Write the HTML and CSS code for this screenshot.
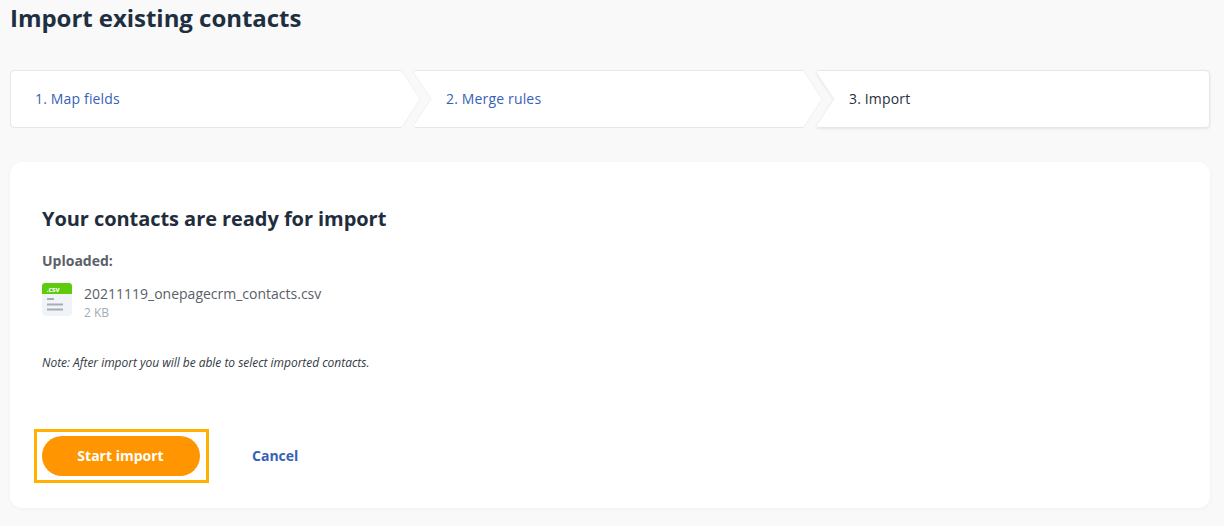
FILE: index.html
```html
<!DOCTYPE html>
<html lang="en">
<head>
<meta charset="utf-8">
<title>Import existing contacts</title>
<link rel="stylesheet" href="styles.css">
</head>
<body>
<h1 class="page-title">Import existing contacts</h1>
<nav class="steps">
  <a class="step step-first">
    <svg class="step-bg" width="412" height="58" viewBox="0 0 412 58"><path class="fill" d="M4 .5H390a3 3 0 0 1 2.400 1.200L410 29 392.400 56.300a3 3 0 0 1-2.400 1.200H4a3.500 3.500 0 0 1-3.500-3.500V4a3.500 3.500 0 0 1 3.500-3.500Z"/><path class="edge" d="M391 .5H4a3.500 3.500 0 0 0-3.500 3.500V54a3.500 3.500 0 0 0 3.500 3.500H391"/></svg>
    <span class="step-label">1. Map fields</span>
  </a>
  <a class="step step-mid">
    <svg class="step-bg" width="412" height="58" viewBox="0 0 412 58"><path class="fill" d="M2 .5H389a3 3 0 0 1 2.400 1.200L409 29 391.400 56.300a3 3 0 0 1-2.400 1.200H2a1.500 1.500 0 0 1-1.200-2.400L18 29 .8 2.900A1.500 1.500 0 0 1 2 .5Z"/><path class="edge" d="M2 .5H390M2 57.500H390"/></svg>
    <span class="step-label">2. Merge rules</span>
  </a>
  <a class="step step-last">
    <svg class="step-bg step-bg-last" width="394" height="58" viewBox="0 0 394 58"><path class="fill" d="M2 .5H390a3.500 3.500 0 0 1 3.500 3.500V54a3.500 3.500 0 0 1-3.500 3.500H2a1.500 1.500 0 0 1-1.200-2.400L18 29 .8 2.900A1.500 1.500 0 0 1 2 .5Z"/><path class="edge" d="M2 .5H390a3.500 3.500 0 0 1 3.500 3.500V54a3.500 3.500 0 0 1-3.500 3.500H2"/></svg>
    <span class="step-label">3. Import</span>
  </a>
</nav>
<main class="card">
  <h2 class="card-title">Your contacts are ready for import</h2>
  <div class="uploaded-label">Uploaded:</div>
  <div class="file">
    <svg class="file-icon" viewBox="0 0 30 34" aria-hidden="true">
      <path class="icon-body" d="M0 10H30V29a4 4 0 0 1-4 4H4a4 4 0 0 1-4-4Z"/>
      <path class="icon-head" d="M3 0H27a3 3 0 0 1 3 3V11H0V3a3 3 0 0 1 3-3Z"/>
      <text class="icon-text" x="4.500" y="8.500">.csv</text>
      <rect class="icon-line" x="5" y="15" width="7" height="2"/>
      <rect class="icon-line" x="5" y="20.500" width="16" height="2"/>
      <rect class="icon-line" x="5" y="25.500" width="16" height="2"/>
    </svg>
    <div class="file-info">
      <div class="file-name">20211119_onepagecrm_contacts.csv</div>
      <div class="file-size">2 KB</div>
    </div>
  </div>
  <p class="note">Note: After import you will be able to select imported contacts.</p>
  <div class="actions">
    <div class="focus-frame"><button class="primary">Start import</button></div>
    <a class="cancel">Cancel</a>
  </div>
</main>
</body>
</html>
```

FILE: styles.css
```css
* { box-sizing: border-box; }
html, body { margin: 0; height: 100%; overflow: hidden; }
body {
  background: #f9f9f9;
  font-family: "Open Sans", sans-serif;
  color: #1f2d3d;
  padding: 0 14px 0 10px;
}
.page-title {
  margin: 0;
  padding-top: 1px;
  font-size: 24px;
  line-height: 33px;
  font-weight: 700;
  letter-spacing: -.04px;
  color: #1e2f41;
}
.steps {
  display: flex;
  margin-top: 36px;
  height: 58px;
}
.step {
  position: relative;
  display: flex;
  align-items: center;
  height: 58px;
  padding-bottom: 2px;
  font-size: 14px;
  font-weight: 500;
  letter-spacing: .16px;
  color: #3761b8;
}
.step-first { width: 403px; padding-left: 25px; }
.step-mid { width: 403px; padding-left: 33px; }
.step-last { flex: 1; padding-left: 33px; color: #27313d; }
.step-bg { position: absolute; left: 0; top: 0; overflow: visible; }
.step-bg-last { filter: drop-shadow(0 1px 1px rgba(0,0,0,.08)); }
.fill { fill: #fff; stroke: #f1f1f1; stroke-width: 1; }
.edge { fill: none; stroke: #e7e7e7; stroke-width: 1; }
.step-label { position: relative; }
.card {
  margin-top: 34px;
  height: 346px;
  background: #fff;
  border-radius: 12px;
  box-shadow: 0 1px 4px rgba(0,0,0,.04);
  padding: 43px 32px 0;
}
.card-title {
  margin: 0;
  font-size: 20px;
  line-height: 27px;
  font-weight: 700;
  letter-spacing: -.06px;
  color: #1f2d3d;
}
.uploaded-label {
  margin-top: 19px;
  font-size: 14px;
  line-height: 19px;
  font-weight: 700;
  color: #5a6068;
}
.file {
  display: flex;
  align-items: flex-start;
  gap: 12px;
  margin-top: 13px;
}
.file-icon { width: 30px; height: 34px; flex: none; }
.icon-body { fill: #f0f3f8; }
.icon-head { fill: #5fcb0f; }
.icon-text { fill: #fff; font-size: 7px; font-weight: 700; font-family: "Open Sans", sans-serif; }
.icon-line { fill: #a9acb3; }
.file-info { padding-top: 1px; }
.file-name { font-size: 14px; line-height: 19px; color: #5a6068; }
.file-size { margin-top: 2px; font-size: 12px; line-height: 16px; color: #a6abb3; }
.note {
  margin: 34px 0 0;
  font-size: 12px;
  line-height: 16px;
  font-style: italic;
  letter-spacing: -.03px;
  color: #333a44;
}
.actions {
  display: flex;
  align-items: center;
  gap: 43px;
  margin-top: 58px;
  margin-left: -8px;
}
.focus-frame {
  border: 3px solid #ffb000;
  padding: 4px 6px 4px 5px;
  height: 54px;
}
.primary {
  display: block;
  width: 158px;
  height: 40px;
  padding: 0 1px 2px 0;
  border: 0;
  border-radius: 20px;
  background: #ff9500;
  color: #fff;
  font: 700 14px "Open Sans", sans-serif;
}
.cancel {
  position: relative;
  padding-bottom: 2px;
  font-size: 14px;
  font-weight: 700;
  color: #3761b8;
}
```
